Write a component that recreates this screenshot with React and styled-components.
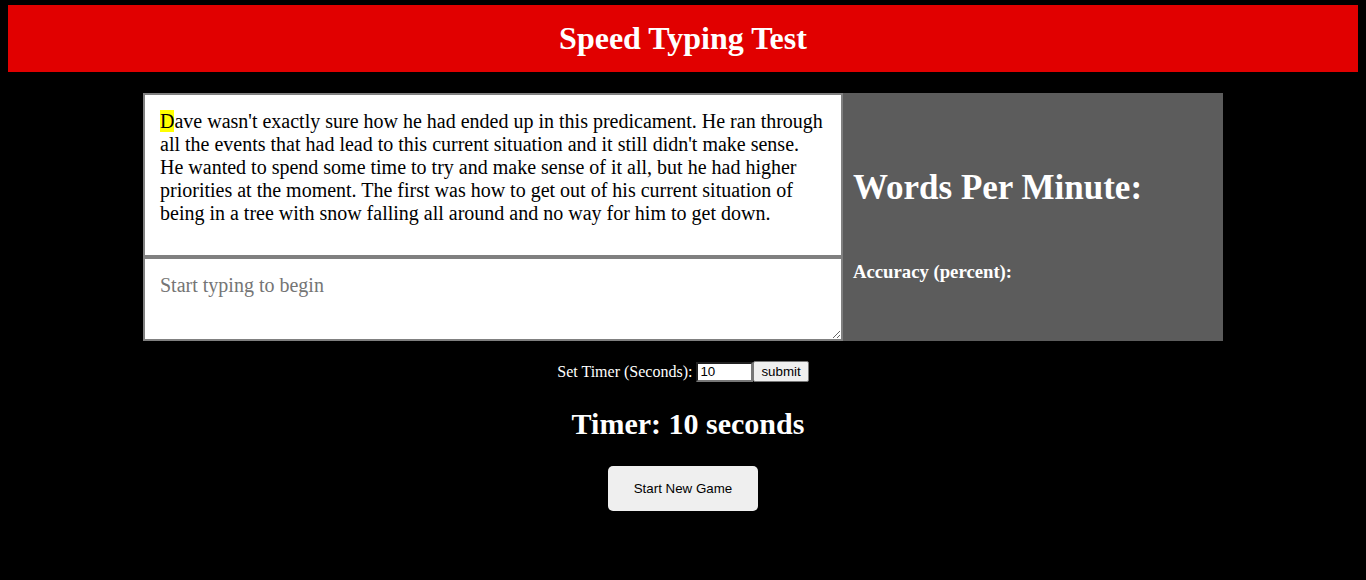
import styled, {createGlobalStyle} from "styled-components";

const GlobalStyle = createGlobalStyle`
    body {
        margin: 0;
        background: #000;
        font-family: "Liberation Serif", "Times New Roman", serif;
    }
`;

const Page = styled.div`
    padding: 5px 8px 0;
    min-height: 575px;
    display: flex;
    flex-direction: column;
    align-items: center;
`;

const Header = styled.header`
    align-self: stretch;
    height: 67px;
    background: #e10000;
    display: flex;
    align-items: center;
    justify-content: center;
`;

const Title = styled.h1`
    margin: 0;
    color: #fff;
    font-size: 32px;
    font-weight: 700;
`;

const Board = styled.div`
    margin-top: 21px;
    width: 1080px;
    display: grid;
    grid-template-columns: 700px 380px;
    height: 248px;
`;

const TypingColumn = styled.div`
    display: flex;
    flex-direction: column;
`;

const Passage = styled.div`
    box-sizing: border-box;
    height: 164px;
    border: 2px solid #808080;
    background: #fff;
    padding: 15px;
    font-size: 20px;
    line-height: 23px;
    color: #000;
`;

const Current = styled.span`
    background: #ffff00;
`;

const Input = styled.textarea`
    box-sizing: border-box;
    display: block;
    width: 100%;
    height: 84px;
    margin: 0;
    border: 2px solid #808080;
    padding: 15px;
    font-family: "Liberation Serif", "Times New Roman", serif;
    font-size: 20px;
    line-height: 23px;
    outline: none;

    &::placeholder {
        color: #757575;
    }
`;

const Stats = styled.div`
    background: #5c5c5c;
    color: #fff;
    padding: 75px 10px 0;
`;

const Wpm = styled.h2`
    margin: 0;
    font-size: 35px;
    line-height: 40px;
    font-weight: 700;
`;

const Accuracy = styled.h3`
    margin: 53px 0 0;
    font-size: 18.72px;
    line-height: 22px;
    font-weight: 700;
`;

const TimerForm = styled.form`
    margin-top: 20px;
    display: flex;
    align-items: center;
    height: 21px;
    color: #fff;
    font-size: 16px;
`;

const Label = styled.label`
    margin-right: 4px;
`;

const SecondsInput = styled.input`
    box-sizing: border-box;
    width: 57px;
    height: 20px;
    padding: 1px 2px;
    border: 2px inset #767676;
    font-family: "Liberation Sans", Arial, sans-serif;
    font-size: 13.33px;
`;

const Submit = styled.button`
    box-sizing: border-box;
    height: 21px;
    padding: 1px 7px;
    border: 1px solid #767676;
    border-radius: 2px;
    background: #efefef;
    font-family: "Liberation Sans", Arial, sans-serif;
    font-size: 13.33px;
    color: #000;
`;

const TimerText = styled.h2`
    margin: 24px 0 0;
    padding-left: 10px;
    color: #fff;
    font-size: 30px;
    line-height: 35px;
    font-weight: 700;
`;

const NewGame = styled.button`
    margin-top: 25px;
    width: 150px;
    height: 45px;
    border: none;
    border-radius: 5px;
    background: #efefef;
    font-family: "Liberation Sans", Arial, sans-serif;
    font-size: 13.33px;
    color: #000;
`;

const passage = "Dave wasn't exactly sure how he had ended up in this predicament. He ran through all the events that had lead to this current situation and it still didn't make sense. He wanted to spend some time to try and make sense of it all, but he had higher priorities at the moment. The first was how to get out of his current situation of being in a tree with snow falling all around and no way for him to get down.";

export default function App() {
    return (
        <>
            <GlobalStyle/>
            <Page>
                <Header>
                    <Title>Speed Typing Test</Title>
                </Header>
                <Board>
                    <TypingColumn>
                        <Passage>
                            <Current>{passage[0]}</Current>{passage.slice(1)}
                        </Passage>
                        <Input placeholder="Start typing to begin"/>
                    </TypingColumn>
                    <Stats>
                        <Wpm>Words Per Minute:</Wpm>
                        <Accuracy>Accuracy (percent):</Accuracy>
                    </Stats>
                </Board>
                <TimerForm onSubmit={e => e.preventDefault()}>
                    <Label>Set Timer (Seconds):</Label>
                    <SecondsInput defaultValue="10"/>
                    <Submit type="submit">submit</Submit>
                </TimerForm>
                <TimerText>Timer: 10 seconds</TimerText>
                <NewGame>Start New Game</NewGame>
            </Page>
        </>
    );
}
